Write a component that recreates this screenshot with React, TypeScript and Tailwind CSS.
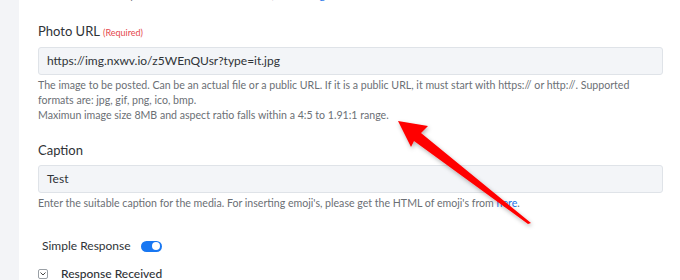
import React from 'react';

const font = { fontFamily: 'Lato, "Open Sans", sans-serif' };

const App: React.FC = () => {
  return (
    <div className="relative w-[680px] h-[280px] overflow-hidden bg-[#f3f4f7] flex" style={font}>
      {/* Panel */}
      <div className="ml-[19px] flex-1 bg-white pl-[19px] pr-[17px]">
        {/* Previous help line, cut off at the top */}
        <div className="-mt-[12px] h-[15px] flex text-[10.6px] leading-[15px] text-[#6b6f75] whitespace-nowrap">
          <span>Add the media that you want to send in this action, read the</span>
          <span className="ml-[4px] text-[#1a73e8]">guide</span>
        </div>

        {/* Photo URL */}
        <div className="mt-[20px] flex items-baseline gap-[3px] text-[13px] leading-[16px] text-[#2f3337]">
          Photo URL <span className="text-[9px] text-[#e5484d]">(Required)</span>
        </div>
        <div className="mt-[6px] h-[28px] rounded-[3px] border border-[#dfe3e8] bg-[#f3f5f8] px-[8px] flex items-center text-[12px] text-[#2f3337]">
          https://img.nxwv.io/z5WEnQUsr?type=it.jpg
        </div>
        <div className="mt-[3px] text-[10.6px] leading-[15px] text-[#6b6f75]">
          The image to be posted. Can be an actual file or a public URL. If it is a public URL, it must start with https:// or http://. Supported formats are: jpg, gif, png, ico, bmp.
          <br />
          Maximun image size 8MB and aspect ratio falls within a 4:5 to 1.91:1 range.
        </div>

        {/* Caption */}
        <div className="mt-[19px] text-[13px] leading-[16px] text-[#2f3337]">Caption</div>
        <div className="mt-[7px] h-[28px] rounded-[3px] border border-[#dfe3e8] bg-[#f3f5f8] px-[8px] flex items-center text-[12px] text-[#2f3337]">
          Test
        </div>
        <div className="mt-[3px] text-[10.6px] leading-[15px] text-[#6b6f75]">
          Enter the suitable caption for the media. For inserting emoji's, please get the HTML of emoji's from{' '}
          <span className="text-[#1a73e8]">here</span>.
        </div>

        {/* Simple Response */}
        <div className="mt-[28px] ml-[4px] flex items-center gap-[10px] text-[12px] leading-[14px] text-[#2f3337]">
          Simple Response
          <div className="w-[21px] h-[11px] rounded-full bg-[#1877f2] flex items-center justify-end pr-[2px]">
            <div className="w-[8px] h-[8px] rounded-full bg-white" />
          </div>
        </div>

        {/* Response Received */}
        <div className="mt-[14px] flex items-center gap-[13px] text-[12px] leading-[14px] font-medium text-[#2f3337]">
          <div className="w-[10px] h-[10px] rounded-[2px] border border-[#9aa0a6] flex items-center justify-center">
            <svg width="6" height="4" viewBox="0 0 6 4" fill="none">
              <path d="M0.5 0.5 L3 3 L5.5 0.5" stroke="#444" strokeWidth="1" />
            </svg>
          </div>
          Response Received
        </div>
      </div>

      {/* Annotation arrow */}
      <svg className="absolute left-0 top-0 pointer-events-none" width="680" height="280">
        <defs>
          <filter id="sh" x="-20%" y="-20%" width="140%" height="140%">
            <feDropShadow dx="1" dy="2" stdDeviation="2" floodColor="#000" floodOpacity="0.3" />
          </filter>
        </defs>
        <polygon
          points="398,121 428,126 421,133 531,223 528,224 414,141 411,147"
          fill="#ff0000"
          filter="url(#sh)"
        />
      </svg>
    </div>
  );
};

export default App;
